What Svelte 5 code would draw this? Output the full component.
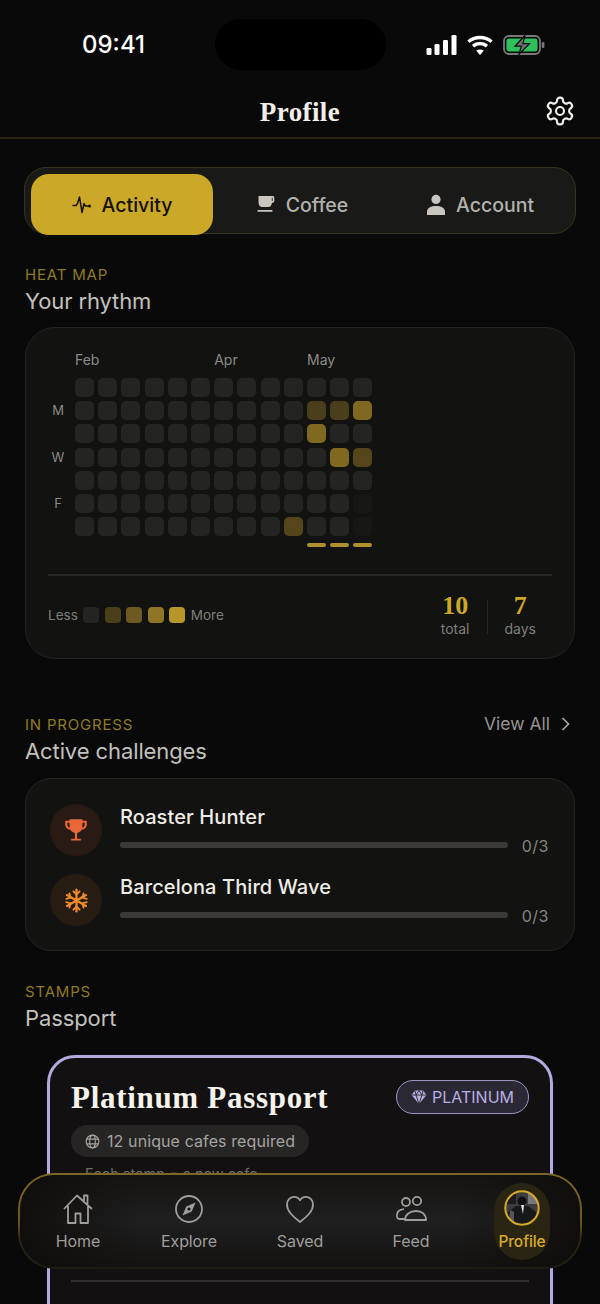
<script lang="ts">
  const months = [
    { label: 'Feb', col: 0 },
    { label: 'Apr', col: 6 },
    { label: 'May', col: 10 }
  ];
  const days = ['', 'M', '', 'W', '', 'F', ''];

  // week columns, top to bottom: 0 empty, 1..4 gold level, -1 future day
  const weeks: number[][] = Array.from({ length: 13 }, () => [0, 0, 0, 0, 0, 0, 0]);
  weeks[9][6] = 2;
  weeks[10][1] = 1;
  weeks[10][2] = 3;
  weeks[11][1] = 1;
  weeks[11][3] = 3;
  weeks[12][1] = 3;
  weeks[12][3] = 2;
  weeks[12][5] = -1;
  weeks[12][6] = -1;

  const challenges = [
    { name: 'Roaster Hunter', icon: 'trophy', progress: '0/3' },
    { name: 'Barcelona Third Wave', icon: 'snow', progress: '0/3' }
  ];
</script>

<div class="screen">
  <div class="island"></div>

  <div class="status">
    <span class="time">09:41</span>
    <div class="status-icons">
      <svg width="31" height="20" viewBox="0 0 31 20" fill="#fff">
        <rect x="0.500" y="13" width="5" height="7" rx="1.200" />
        <rect x="8.500" y="9" width="5" height="11" rx="1.200" />
        <rect x="17" y="5" width="5" height="15" rx="1.200" />
        <rect x="25.500" y="0" width="5" height="20" rx="1.200" />
      </svg>
      <svg width="26" height="20" viewBox="0 0 26 20" fill="none" stroke="#fff" stroke-width="3.400">
        <path d="M1.500 6.700C7.800 1.100 18.200 1.100 24.500 6.700" />
        <path d="M6 11.100c4-3.400 10-3.400 14 0" />
        <path d="M13 20l-3.800-4.400c2-1.500 5.600-1.500 7.600 0z" fill="#fff" stroke="none" />
      </svg>
      <svg width="42" height="20" viewBox="0 0 42 20">
        <rect x="1" y="1" width="36" height="18" rx="5" fill="none" stroke="#77797a" stroke-width="1.800" />
        <rect x="3.400" y="3.400" width="31.200" height="13.200" rx="3" fill="#2fc05b" />
        <rect x="38.800" y="7" width="2.600" height="6" rx="1.300" fill="#77797a" />
        <path d="M22 0.500L12 11.200h6.500l-2.800 8.300L26.500 8.600h-6.600z" fill="#6e7072" stroke="#0a0a0a" stroke-width="1.200" />
      </svg>
    </div>
  </div>

  <header class="top">
    <h1>Profile</h1>
    <svg class="gear" width="32" height="32" viewBox="0 0 24 24" fill="none" stroke="#f2f0ea" stroke-width="1.600" stroke-linejoin="round">
      <path d="M12.220 2h-.44a2 2 0 0 0-2 2v.18a2 2 0 0 1-1 1.730l-.43.250a2 2 0 0 1-2 0l-.15-.08a2 2 0 0 0-2.730.730l-.22.380a2 2 0 0 0 .73 2.730l.15.1a2 2 0 0 1 1 1.720v.51a2 2 0 0 1-1 1.740l-.15.09a2 2 0 0 0-.73 2.730l.22.380a2 2 0 0 0 2.730.730l.15-.08a2 2 0 0 1 2 0l.43.250a2 2 0 0 1 1 1.730V20a2 2 0 0 0 2 2h.44a2 2 0 0 0 2-2v-.18a2 2 0 0 1 1-1.730l.43-.25a2 2 0 0 1 2 0l.15.08a2 2 0 0 0 2.730-.73l.22-.39a2 2 0 0 0-.73-2.730l-.15-.08a2 2 0 0 1-1-1.740v-.5a2 2 0 0 1 1-1.740l.15-.09a2 2 0 0 0 .73-2.730l-.22-.38a2 2 0 0 0-2.730-.73l-.15.08a2 2 0 0 1-2 0l-.43-.25a2 2 0 0 1-1-1.730V4a2 2 0 0 0-2-2z" />
      <circle cx="12" cy="12" r="3" />
    </svg>
  </header>

  <main class="content">
    <div class="tabs">
      <button class="tab active">
        <svg width="20" height="20" viewBox="0 0 20 20" fill="none" stroke="#14110a" stroke-width="1.500" stroke-linejoin="round" stroke-linecap="round">
          <path d="M1 10.500h3l1.500-2L7.500 2l2.500 15.500 2-9 1.200 2.500h3" />
          <circle cx="17.500" cy="11" r="1.500" fill="#14110a" stroke="none" />
        </svg>
        Activity
      </button>
      <button class="tab">
        <svg width="20" height="20" viewBox="0 0 20 20" fill="#c9c6c0">
          <path d="M2.500 1h14.200c1 0 1.600 .7 1.600 1.600V6c0 1-.7 1.700-1.700 1.700H16c-.4 2.800-1.600 4.300-3.800 4.300H6.400C3.800 12 2.600 10 2.500 7.500zM15.800 2.800v3.200h.8V2.800z" fill-rule="evenodd" />
          <rect x="1.500" y="15" width="15" height="1.800" rx=".6" />
        </svg>
        Coffee
      </button>
      <button class="tab">
        <svg width="20" height="22" viewBox="0 0 20 22" fill="#c9c6c0">
          <circle cx="10" cy="5.400" r="4.600" />
          <path d="M1 21v-3.500C1 14 5 12 10 12s9 2 9 5.500V21z" />
        </svg>
        Account
      </button>
    </div>

    <section class="heat-section">
      <div class="eyebrow">HEAT MAP</div>
      <h2>Your rhythm</h2>
      <div class="card heat-card">
        <div class="heat-grid">
          <div class="months">
            {#each months as m}
              <span class="month" style="left: {m.col * 23.2}px">{m.label}</span>
            {/each}
          </div>
          <div class="heat-body">
            <div class="day-labels">
              {#each days as d}
                <span>{d}</span>
              {/each}
            </div>
            <div class="weeks">
              {#each weeks as week, w}
                <div class="week">
                  {#each week as level}
                    <span class="cell l{level}"></span>
                  {/each}
                  {#if w > 9}
                    <span class="today-bar"></span>
                  {/if}
                </div>
              {/each}
            </div>
          </div>
        </div>

        <div class="heat-foot">
          <div class="legend">
            <span>Less</span>
            <i class="swatch l0"></i>
            <i class="swatch l1"></i>
            <i class="swatch l2"></i>
            <i class="swatch l3"></i>
            <i class="swatch l4"></i>
            <span>More</span>
          </div>
          <div class="stats">
            <div class="stat">
              <strong>10</strong>
              <small>total</small>
            </div>
            <div class="stat-rule"></div>
            <div class="stat">
              <strong>7</strong>
              <small>days</small>
            </div>
          </div>
        </div>
      </div>
    </section>

    <section class="challenge-section">
      <div class="section-head">
        <div>
          <div class="eyebrow">IN PROGRESS</div>
          <h2>Active challenges</h2>
        </div>
        <div class="view-all">
          View All
          <svg width="12" height="16" viewBox="0 0 12 16" fill="none" stroke="#a8a6a1" stroke-width="1.700">
            <path d="M2.500 2l6 6-6 6" />
          </svg>
        </div>
      </div>
      <div class="card challenge-card">
        {#each challenges as c}
          <div class="challenge">
            <div class="badge {c.icon}">
              {#if c.icon === 'trophy'}
                <svg width="26" height="26" viewBox="0 0 24 24" fill="#e8683a">
                  <path d="M6 2h12v1.500h4v3.200c0 3-2 4.800-4.800 5.100-.9 1.600-2.200 2.600-4.200 2.900V20h3.500v1.800h-9V20H11v-5.300c-2-.3-3.300-1.300-4.200-2.900C4 11.500 2 9.700 2 6.700V3.500h4zM4 5.200v1.500c0 1.600 .8 2.800 2.300 3.300C6 8.600 6 7 6 5.200zm16 0h-2c0 1.800 0 3.400-.3 4.800C19.200 9.500 20 8.300 20 6.700z" fill-rule="evenodd" />
                </svg>
              {:else}
                <svg width="25" height="25" viewBox="0 0 24 24" fill="none" stroke="#ee8a2c" stroke-width="2.200" stroke-linecap="round">
                  <path d="M12 1.500v21M2.900 6.800l18.200 10.400M2.900 17.200L21.100 6.800" />
                  <path d="M9 3.200l3 3 3-3M9 20.800l3-3 3 3M2.200 10.400l4.100-1.100-1.100-4.100M21.800 13.600l-4.100 1.100 1.100 4.100M2.200 13.600l4.100 1.100-1.100 4.100M21.800 10.400l-4.100-1.100 1.100-4.100" stroke-width="1.800" />
                </svg>
              {/if}
            </div>
            <div class="challenge-body">
              <div class="challenge-name">{c.name}</div>
              <div class="progress-row">
                <div class="track"></div>
                <span class="count">{c.progress}</span>
              </div>
            </div>
          </div>
        {/each}
      </div>
    </section>

    <section class="stamps-section">
      <div class="eyebrow">STAMPS</div>
      <h2>Passport</h2>
      <div class="passport">
        <div class="passport-head">
          <h3>Platinum Passport</h3>
          <div class="tier">
            <svg width="16" height="16" viewBox="0 0 16 16" fill="#b9aee0">
              <path d="M4 1.500h8L15.500 6 8 15 .5 6z" />
              <path d="M.5 6h15M5 6l3 9 3-9M4 1.500L5 6l3-4.500L11 6l1-4.500" fill="none" stroke="#2a2735" stroke-width=".9" />
            </svg>
            PLATINUM
          </div>
        </div>
        <div class="requirement">
          <svg width="15" height="15" viewBox="0 0 16 16" fill="none" stroke="#a5a3a0" stroke-width="1.200">
            <circle cx="8" cy="8" r="6.800" />
            <ellipse cx="8" cy="8" rx="3" ry="6.800" />
            <path d="M1.800 5.500h12.400M1.800 10.500h12.400" />
          </svg>
          12 unique cafes required
        </div>
        <p class="note">Each stamp = a new cafe</p>
        <div class="passport-rule"></div>
      </div>
    </section>
  </main>

  <nav class="tabbar">
    <div class="nav-item">
      <svg width="32" height="32" viewBox="0 0 32 32" fill="none" stroke="#a09e9a" stroke-width="1.800" stroke-linejoin="round">
        <path d="M2 16L15 2.500 30 16M6 13v17h7.500v-9.500h5V30H26V13M22 9V2.500h3.500v10" />
      </svg>
      <span>Home</span>
    </div>
    <div class="nav-item">
      <svg width="32" height="32" viewBox="0 0 32 32" fill="none" stroke="#a09e9a" stroke-width="1.800">
        <circle cx="16" cy="16" r="13" />
        <path d="M22.500 9.500l-3.800 9-9.200 4 3.800-9z" fill="#a09e9a" stroke="none" />
        <circle cx="16" cy="16" r="1.600" fill="#1a1917" stroke="none" />
      </svg>
      <span>Explore</span>
    </div>
    <div class="nav-item">
      <svg width="32" height="32" viewBox="0 0 32 32" fill="none" stroke="#a09e9a" stroke-width="1.800" stroke-linejoin="round">
        <path d="M16 29C8 22.500 3 18 3 11.500 3 7 6.500 3.800 10.200 3.800c2.500 0 4.600 1.300 5.800 3.500 1.200-2.200 3.300-3.500 5.800-3.500C25.500 3.800 29 7 29 11.500 29 18 24 22.500 16 29z" />
      </svg>
      <span>Saved</span>
    </div>
    <div class="nav-item">
      <svg width="32" height="32" viewBox="0 0 32 32" fill="none" stroke="#a09e9a" stroke-width="1.800" stroke-linejoin="round">
        <circle cx="11" cy="9" r="4" />
        <circle cx="22" cy="8" r="4.200" />
        <path d="M2 22c0-3.500 3-5.500 7-5.800M10 27c0-5.500 5-9 11-9s10 3.500 10 9zM2 22c-.5 3 1 4 3 4h5" />
      </svg>
      <span>Feed</span>
    </div>
    <div class="nav-item current">
      <svg class="avatar" width="36" height="36" viewBox="0 0 36 36">
        <defs>
          <clipPath id="avatar-clip"><circle cx="18" cy="18" r="16.500" /></clipPath>
        </defs>
        <g clip-path="url(#avatar-clip)">
          <rect width="36" height="36" fill="#3c3d3f" />
          <rect x="0" y="0" width="12" height="14" fill="#1c1c1e" />
          <rect x="24" y="2" width="10" height="12" fill="#77787a" />
          <path d="M4 36V22l8-6h12l8 6v14z" fill="#17181a" />
          <circle cx="18" cy="11" r="4.500" fill="#101012" />
          <path d="M17 15h3l-1 9z" fill="#e4e4e4" />
          <path d="M6 20l4 2v10H5z" fill="#55565a" />
        </g>
        <circle cx="18" cy="18" r="16.700" fill="none" stroke="#d6ab2b" stroke-width="2" />
      </svg>
      <span>Profile</span>
    </div>
  </nav>
</div>

<style>
  :global(body) {
    background: #090909;
  }

  .screen {
    position: relative;
    width: 600px;
    height: 1304px;
    overflow: hidden;
    background: #090909;
    color: #f2f0ea;
    font-family: Inter, 'Noto Sans', sans-serif;
  }

  .island {
    position: absolute;
    left: 215px;
    top: 19px;
    width: 171px;
    height: 51px;
    border-radius: 26px;
    background: #000;
  }

  .status {
    height: 90px;
    box-sizing: border-box;
    padding: 30px 55px 0 82px;
    display: flex;
    justify-content: space-between;
  }

  .time {
    font-size: 24px;
    line-height: 29px;
    font-weight: 500;
    color: #fff;
  }

  .status-icons {
    display: flex;
    align-items: flex-start;
    gap: 10px;
    padding-top: 5px;
  }

  .top {
    position: relative;
    height: 49px;
    box-sizing: border-box;
    display: flex;
    justify-content: center;
    padding-top: 4px;
    border-bottom: 2px solid #2e2412;
  }

  .top h1 {
    margin: 0;
    font: 700 27px/36px 'Liberation Serif', serif;
    letter-spacing: 0.4px;
    color: #f2efe8;
  }

  .gear {
    position: absolute;
    right: 24px;
    top: 5px;
  }

  .content {
    padding: 28px 25px 0;
  }

  .tabs {
    height: 67px;
    margin: 0 -1px;
    box-sizing: border-box;
    display: flex;
    align-items: stretch;
    padding: 6px 6px 0;
    border: 1px solid #38341f;
    border-radius: 22px;
    background: #191918;
  }

  .tab {
    flex: 1;
    height: 61px;
    display: flex;
    align-items: center;
    justify-content: center;
    gap: 10px;
    border: 0;
    border-radius: 18px;
    background: none;
    color: #b3b1ac;
    font: 500 19.500px/24px Inter, sans-serif;
    padding: 0;
  }

  .tab.active {
    flex: 0 0 182px;
    background: #cca829;
    color: #14110a;
  }

  .heat-section {
    margin-top: 32px;
  }

  .eyebrow {
    font-size: 15px;
    line-height: 18px;
    letter-spacing: 0.8px;
    color: #8f7a26;
  }

  h2 {
    margin: 2px 0 0;
    font-size: 22px;
    line-height: 30px;
    font-weight: 400;
    letter-spacing: -0.1px;
    color: #c3c1bc;
  }

  .card {
    border: 1px solid #242422;
    background: #121211;
    box-sizing: border-box;
  }

  .heat-card {
    height: 332px;
    margin-top: 11px;
    border-radius: 30px;
    padding: 23px 22px 0;
  }

  .heat-grid {
    padding-left: 27px;
  }

  .months {
    position: relative;
    height: 27px;
    font-size: 14px;
    line-height: 18px;
    color: #8c8a86;
  }

  .month {
    position: absolute;
    top: 0;
  }

  .heat-body {
    position: relative;
  }

  .day-labels {
    position: absolute;
    left: -27px;
    top: 0;
    width: 20px;
    display: grid;
    grid-auto-rows: 23.2px;
    font-size: 13px;
    color: #8c8a86;
    text-align: center;
  }

  .day-labels span {
    line-height: 19px;
  }

  .weeks {
    display: flex;
    gap: 4.200px;
    height: 170px;
  }

  .week {
    display: flex;
    flex-direction: column;
    gap: 4.200px;
    width: 19px;
  }

  .cell {
    width: 19px;
    height: 19px;
    border-radius: 5px;
  }

  .today-bar {
    height: 4px;
    border-radius: 2px;
    background: #b0902a;
    margin-top: 3px;
  }

  .l0 { background: #242423; }
  .l1 { background: #4a3e1b; }
  .l2 { background: #54451a; }
  .l3 { background: #7f6820; }
  .l-1 { background: #171716; }

  .swatch.l2 { background: #6d5a22; }
  .swatch.l3 { background: #8f7626; }
  .swatch.l4 { background: #b6952a; }

  .heat-foot {
    margin-top: 26px;
    padding-top: 19px;
    border-top: 2px solid #262625;
    display: flex;
    justify-content: space-between;
    align-items: flex-start;
  }

  .legend {
    display: flex;
    align-items: center;
    gap: 5.500px;
    height: 40px;
    font-size: 13.500px;
    color: #807e7a;
  }

  .swatch {
    width: 16px;
    height: 16px;
    border-radius: 4px;
  }

  .stats {
    display: flex;
    align-items: center;
    padding-right: 16px;
    margin-top: -1px;
  }

  .stat {
    display: flex;
    flex-direction: column;
    align-items: center;
  }

  .stat strong {
    font: 700 26px/24px 'Liberation Serif', serif;
    color: #cca829;
  }

  .stat small {
    font-size: 14px;
    line-height: 22px;
    color: #807e7a;
  }

  .stat-rule {
    width: 1px;
    height: 34px;
    margin: 0 17px 0 17px;
    background: #292927;
  }

  .challenge-section {
    margin-top: 57px;
  }

  .section-head {
    display: flex;
    justify-content: space-between;
    align-items: flex-start;
  }

  .view-all {
    display: flex;
    align-items: center;
    gap: 10px;
    font-size: 17.500px;
    line-height: 20px;
    color: #96948f;
    padding-right: 3px;
    margin-top: -2px;
  }

  .challenge-card {
    height: 173px;
    margin-top: 12px;
    border-radius: 26px;
    padding: 25px 25px 0 24px;
  }

  .challenge {
    display: flex;
    gap: 18px;
    height: 70px;
  }

  .badge {
    flex: none;
    width: 52px;
    height: 52px;
    border-radius: 50%;
    display: flex;
    align-items: center;
    justify-content: center;
    background: #2a1a14;
  }

  .badge.snow {
    background: #271c12;
  }

  .challenge-body {
    flex: 1;
    margin-top: -1px;
  }

  .challenge-name {
    font-size: 20px;
    line-height: 28px;
    font-weight: 500;
    letter-spacing: 0.1px;
    color: #eeece6;
  }

  .progress-row {
    display: flex;
    align-items: center;
    gap: 14px;
    margin-top: 4px;
    height: 22px;
  }

  .track {
    flex: 1;
    height: 6px;
    margin-top: -2px;
    border-radius: 3px;
    background: #3b3a39;
  }

  .count {
    font-size: 16px;
    line-height: 20px;
    color: #868480;
    letter-spacing: 0.5px;
  }

  .stamps-section {
    margin-top: 32px;
  }

  .passport {
    margin: 22px 22px 0;
    height: 320px;
    box-sizing: border-box;
    border: 3px solid #b4a9de;
    border-radius: 28px;
    background: #121010;
    padding: 22px 21px 0;
  }

  .passport-head {
    display: flex;
    justify-content: space-between;
    align-items: flex-start;
  }

  .passport h3 {
    margin: -1px 0 0;
    font: 700 31px/38px 'Liberation Serif', serif;
    letter-spacing: 0.7px;
    color: #f6f3ec;
  }

  .tier {
    display: flex;
    align-items: center;
    gap: 5px;
    height: 34px;
    box-sizing: border-box;
    padding: 0 14px;
    border: 1.500px solid #9e94c4;
    border-radius: 17px;
    background: #2b2835;
    font-size: 16px;
    color: #b9aee0;
  }

  .requirement {
    display: inline-flex;
    align-items: center;
    gap: 7px;
    height: 32px;
    margin-top: 8px;
    padding: 0 14px;
    border-radius: 16px;
    background: #262523;
    font-size: 16px;
    letter-spacing: 0.1px;
    color: #a5a3a0;
  }

  .note {
    margin: 7px 0 0 14px;
    font-size: 14.500px;
    line-height: 20px;
    color: #6f6e6b;
  }

  .passport-rule {
    height: 2px;
    margin-top: 96px;
    background: #2f2e2c;
  }

  .tabbar {
    position: absolute;
    left: 18px;
    top: 1173px;
    width: 564px;
    height: 96px;
    box-sizing: border-box;
    display: grid;
    grid-template-columns: repeat(5, 111px);
    padding: 4px 0 0 2.500px;
    border: 2px solid transparent;
    border-radius: 36px;
    background:
      linear-gradient(90deg, rgba(14, 13, 10, 0.9) 0%, rgba(14, 13, 10, 0) 22%, rgba(14, 13, 10, 0) 78%, rgba(14, 13, 10, 0.9) 100%) padding-box,
      linear-gradient(180deg, #151412 0%, #201f20 50%, #131210 100%) padding-box,
      linear-gradient(180deg, #7d6727 0%, #6a5622 50%, #2c2616 70%, #1e1b12 100%) border-box;
  }

  .nav-item {
    display: flex;
    flex-direction: column;
    align-items: center;
    gap: 6px;
    padding-top: 14px;
    font-size: 16px;
    line-height: 20px;
    letter-spacing: -0.1px;
    color: #a09e9a;
  }

  .current {
    justify-self: center;
    width: 56px;
    height: 77px;
    box-sizing: border-box;
    padding-top: 7px;
    gap: 6px;
    margin-top: 4px;
    border-radius: 28px;
    background: #2a2412;
    color: #d6ab2b;
    font-size: 15.500px;
    font-weight: 500;
  }
</style>
